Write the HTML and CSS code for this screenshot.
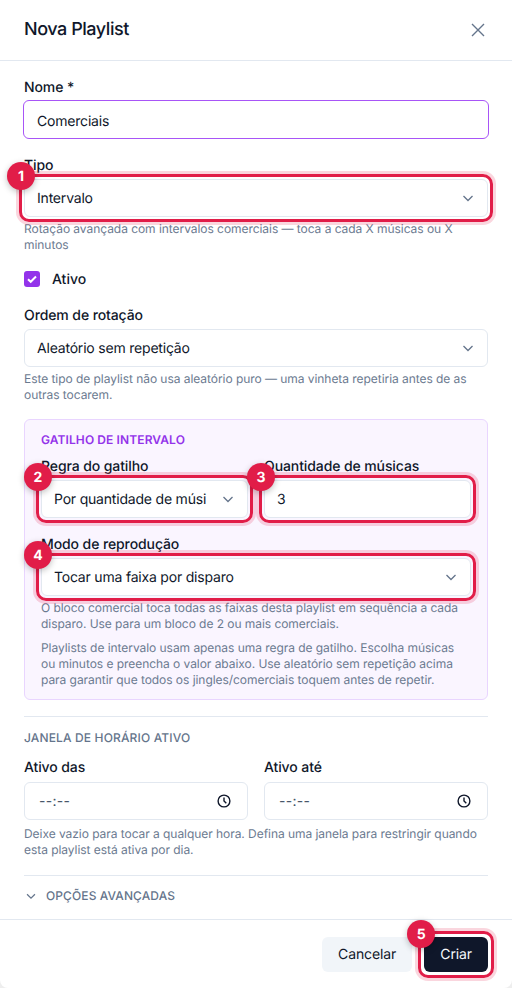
FILE: index.html
```html
<!DOCTYPE html>
<html lang="pt">
<head>
    <meta charset="UTF-8">
    <meta name="viewport" content="width=device-width, initial-scale=1.0">
    <title>Nova Playlist</title>
    <link rel="stylesheet" href="styles.css">
</head>
<body>
    <div class="modal">
        <div class="modal-header">
            <h2>Nova Playlist</h2>
            <svg class="close" viewBox="0 0 16 16"><path d="M2 2l12 12M14 2L2 14"/></svg>
        </div>

        <div class="modal-body">
            <label class="label label-nome">Nome *</label>
            <div class="control focused">Comerciais</div>

            <label class="label label-tipo">Tipo</label>
            <div class="mark">
                <span class="badge">1</span>
                <div class="control select">Intervalo
                    <svg class="chevron" viewBox="0 0 16 16"><path d="M3.5 6l4.5 4.5L12.5 6"/></svg>
                </div>
            </div>
            <p class="hint">Rotação avançada com intervalos comerciais — toca a cada X músicas ou X minutos</p>

            <div class="check-row">
                <span class="checkbox">
                    <svg viewBox="0 0 16 16"><path d="M4 8.3l2.7 2.5L12 5.5"/></svg>
                </span>
                Ativo
            </div>

            <label class="label">Ordem de rotação</label>
            <div class="control select">Aleatório sem repetição
                <svg class="chevron" viewBox="0 0 16 16"><path d="M3.5 6l4.5 4.5L12.5 6"/></svg>
            </div>
            <p class="hint">Este tipo de playlist não usa aleatório puro — uma vinheta repetiria antes de as outras tocarem.</p>

            <div class="panel">
                <div class="panel-title">GATILHO DE INTERVALO</div>
                <div class="two-cols">
                    <div>
                        <label class="label">Regra do gatilho</label>
                        <div class="mark">
                            <span class="badge">2</span>
                            <div class="control select">Por quantidade de músi
                                <svg class="chevron" viewBox="0 0 16 16"><path d="M3.5 6l4.5 4.5L12.5 6"/></svg>
                            </div>
                        </div>
                    </div>
                    <div>
                        <label class="label">Quantidade de músicas</label>
                        <div class="mark">
                            <span class="badge">3</span>
                            <div class="control">3</div>
                        </div>
                    </div>
                </div>
                <label class="label label-modo">Modo de reprodução</label>
                <div class="mark">
                    <span class="badge">4</span>
                    <div class="control select">Tocar uma faixa por disparo
                        <svg class="chevron" viewBox="0 0 16 16"><path d="M3.5 6l4.5 4.5L12.5 6"/></svg>
                    </div>
                </div>
                <p class="hint">O bloco comercial toca todas as faixas desta playlist em sequência a cada disparo. Use para um bloco de 2 ou mais comerciais.</p>
                <p class="hint hint-panel">Playlists de intervalo usam apenas uma regra de gatilho. Escolha músicas ou minutos e preencha o valor abaixo. Use aleatório sem repetição acima para garantir que todos os jingles/comerciais toquem antes de repetir.</p>
            </div>

            <div class="section">
                <div class="section-title">JANELA DE HORÁRIO ATIVO</div>
                <div class="two-cols time-cols">
                    <div>
                        <label class="label label-time">Ativo das</label>
                        <div class="control select time">--:--
                            <svg class="clock" viewBox="0 0 16 16"><circle cx="8" cy="8" r="5.9"/><path d="M8 4.6V8l2.3 2.3"/></svg>
                        </div>
                    </div>
                    <div>
                        <label class="label label-time">Ativo até</label>
                        <div class="control select time">--:--
                            <svg class="clock" viewBox="0 0 16 16"><circle cx="8" cy="8" r="5.9"/><path d="M8 4.6V8l2.3 2.3"/></svg>
                        </div>
                    </div>
                </div>
                <p class="hint hint-time">Deixe vazio para tocar a qualquer hora. Defina uma janela para restringir quando esta playlist está ativa por dia.</p>
            </div>

            <div class="advanced">
                <svg class="chevron-small" viewBox="0 0 16 16"><path d="M3.5 6l4.5 4.5L12.5 6"/></svg>
                <span>OPÇÕES AVANÇADAS</span>
            </div>
        </div>

        <div class="modal-footer">
            <button class="btn btn-light">Cancelar</button>
            <div class="mark mark-btn">
                <span class="badge">5</span>
                <button class="btn btn-dark">Criar</button>
            </div>
        </div>
    </div>
</body>
</html>
```

FILE: styles.css
```css
* {
    box-sizing: border-box;
}

body {
    margin: 0;
    background: #eeeeee;
    font-family: 'Inter', 'Liberation Sans', sans-serif;
    color: #0f172a;
    overflow: hidden;
    text-rendering: geometricPrecision;
}

.modal {
    width: 512px;
    height: 988px;
    background: #fff;
    border-radius: 0 0 8px 8px;
    display: flex;
    flex-direction: column;
}

/* Cabeçalho */
.modal-header {
    height: 61px;
    padding: 0 26px 1px 24px;
    border-bottom: 1px solid #e2e8f0;
    display: flex;
    align-items: center;
    justify-content: space-between;
    flex-shrink: 0;
}

.modal-header h2 {
    margin: 0;
    font-size: 18px;
    font-weight: 500;
    line-height: 28px;
    letter-spacing: -0.45px;
}

.close {
    width: 16px;
    height: 16px;
    fill: none;
    stroke: #64748b;
    stroke-width: 1.4;
}

/* Corpo */
.modal-body {
    flex: 1;
    padding: 16px 24px 0;
}

.label {
    display: block;
    padding-top: 1px;
    font-size: 14px;
    font-weight: 500;
    line-height: 20px;
    letter-spacing: -0.1px;
    margin-bottom: 3px;
}

.label-nome {
    margin-bottom: 2px;
}

.label-tipo,
.label-modo {
    margin-top: 16px;
}

.label-time {
    margin-bottom: 4px;
}

.control {
    height: 38px;
    padding: 0 11px 0 12px;
    border: 1px solid #e2e8f0;
    border-radius: 6px;
    background: #fff;
    font-size: 14px;
    letter-spacing: -0.2px;
    display: flex;
    align-items: center;
    justify-content: space-between;
}

.control.focused {
    height: 39px;
    border: 1.5px solid #a855f7;
    margin-left: -1px;
    width: calc(100% + 2px);
    padding: 3px 11px 0 13px;
}

.chevron {
    width: 16px;
    height: 16px;
    fill: none;
    stroke: #64748b;
    stroke-width: 1.3;
    flex-shrink: 0;
}

.hint {
    margin: 4px 0 0;
    font-size: 12px;
    line-height: 16px;
    letter-spacing: -0.05px;
    color: #6b7a90;
}

.hint-panel {
    margin-top: 8px;
}

.hint-time {
    margin-top: 6px;
}

/* Destaque numerado */
.mark {
    position: relative;
}

.mark::after {
    content: '';
    position: absolute;
    inset: -5px;
    border: 3px solid #e11d48;
    border-radius: 10px;
    box-shadow: 0 0 0 3px rgba(225, 29, 72, 0.18);
    pointer-events: none;
}

.badge {
    position: absolute;
    left: -17px;
    top: -17px;
    width: 28px;
    height: 28px;
    border-radius: 50%;
    background: #e11d48;
    color: #fff;
    font-size: 14px;
    font-weight: 700;
    display: flex;
    align-items: center;
    justify-content: center;
    box-shadow: 0 2px 6px rgba(0, 0, 0, 0.25);
    z-index: 2;
}

/* Ativo */
.check-row {
    margin: 16px 0;
    height: 20px;
    display: flex;
    align-items: center;
    gap: 12px;
    font-size: 14px;
    font-weight: 500;
}

.checkbox {
    width: 16px;
    height: 16px;
    border-radius: 3px;
    background: #9333ea;
    display: flex;
}

.checkbox svg {
    fill: none;
    stroke: #fff;
    stroke-width: 2;
}

/* Painel de intervalo */
.panel {
    margin-top: 16px;
    height: 281px;
    padding: 12px 16px;
    background: #faf5ff;
    border: 1px solid #e9d5ff;
    border-radius: 6px;
}

.panel-title {
    font-size: 12px;
    font-weight: 600;
    line-height: 16px;
    letter-spacing: 0.1px;
    color: #9333ea;
    margin-bottom: 8px;
}

.two-cols {
    display: grid;
    grid-template-columns: 1fr 1fr;
    gap: 16px;
}

/* Janela de horário */
.section {
    margin-top: 16px;
    padding-top: 13px;
    border-top: 1px solid #e2e8f0;
}

.section-title {
    font-size: 12px;
    font-weight: 500;
    line-height: 16px;
    letter-spacing: 0.15px;
    color: #64748b;
}

.time-cols {
    margin-top: 11px;
}

.time {
    color: #475569;
    padding: 0 15px 0 14px;
    letter-spacing: 0.3px;
}

.clock {
    width: 16px;
    height: 16px;
    fill: none;
    stroke: #0f172a;
    stroke-width: 1.4;
}

.advanced {
    margin-top: 17px;
    padding-top: 12px;
    border-top: 1px solid #e2e8f0;
    display: flex;
    align-items: center;
    gap: 8px;
    font-size: 12px;
    font-weight: 500;
    line-height: 16px;
    letter-spacing: 0.1px;
    color: #64748b;
}

.chevron-small {
    width: 14px;
    height: 14px;
    fill: none;
    stroke: #64748b;
    stroke-width: 1.4;
}

/* Rodapé */
.modal-footer {
    height: 69px;
    padding: 17px 24px 0;
    border-top: 1px solid #e2e8f0;
    display: flex;
    justify-content: flex-end;
    gap: 12px;
    flex-shrink: 0;
}

.btn {
    height: 35px;
    border: none;
    border-radius: 6px;
    font-family: inherit;
    font-size: 14px;
    font-weight: 400;
    letter-spacing: -0.1px;
    padding: 0 16px;
    text-rendering: geometricPrecision;
}

.btn-light {
    background: #f1f5f9;
    color: #0f172a;
}

.btn-dark {
    display: block;
    background: #0f172a;
    color: #f8fafc;
}

.mark-btn {
    height: 35px;
}

.mark-btn::after {
    inset: -6px;
}
```
